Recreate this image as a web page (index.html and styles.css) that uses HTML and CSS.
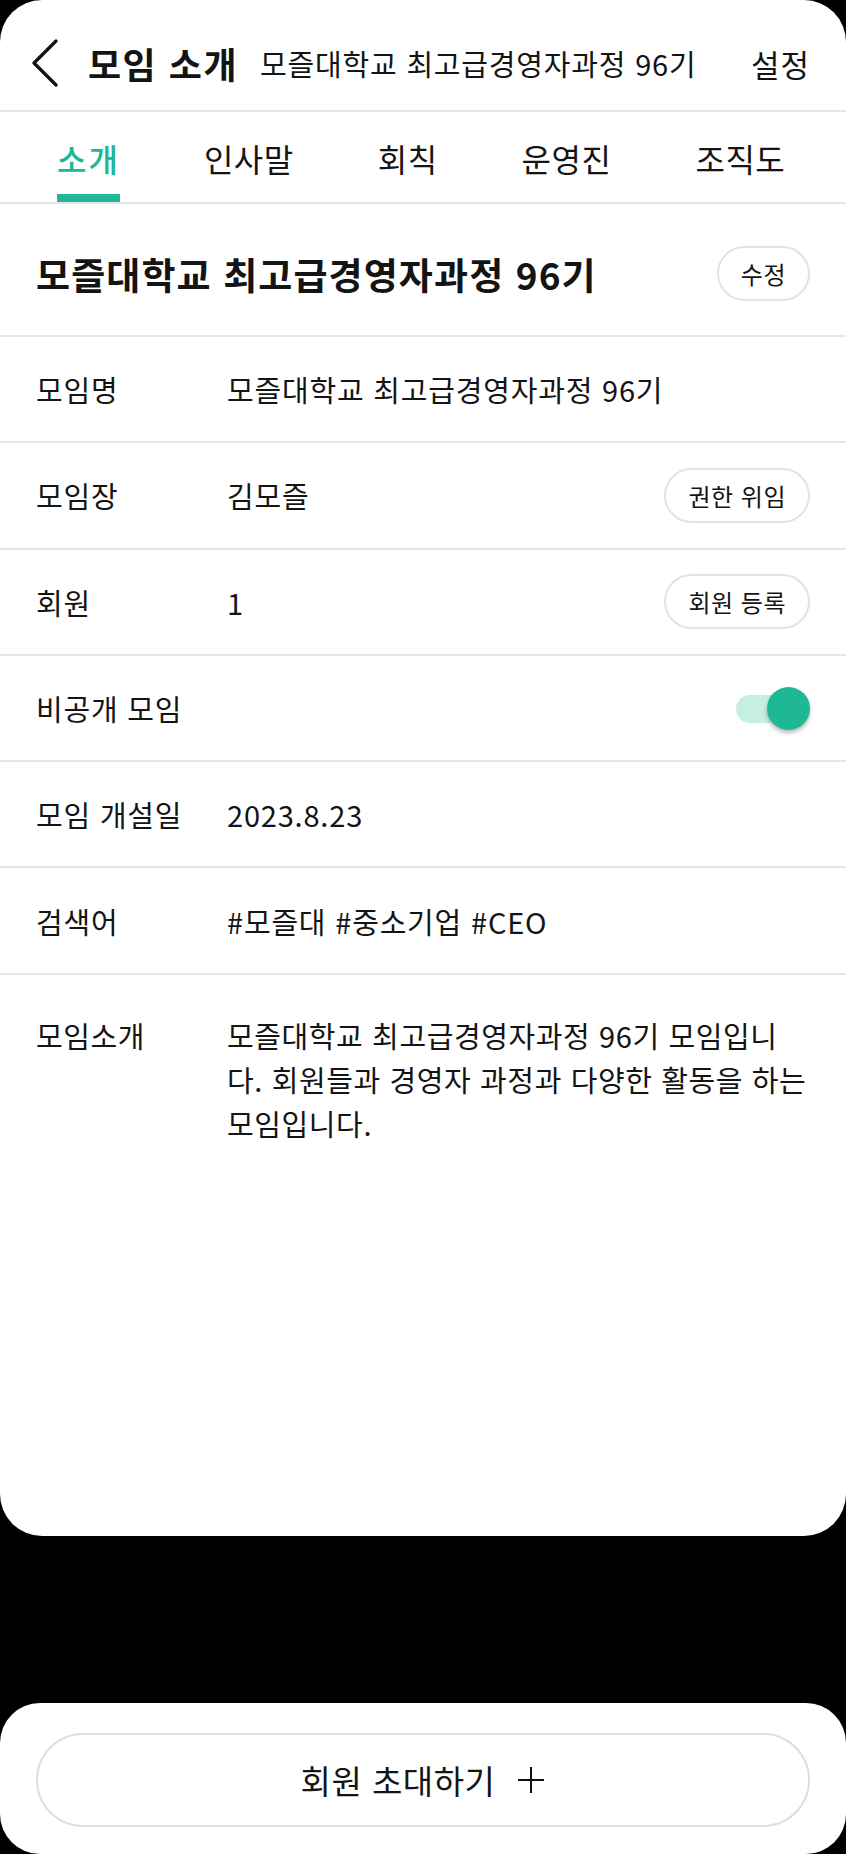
FILE: index.html
```html
<!DOCTYPE html>
<html lang="ko">
<head>
    <meta charset="UTF-8">
    <meta name="viewport" content="width=device-width, initial-scale=1.0">
    <title>모임 소개</title>
    <link rel="stylesheet" href="styles.css">
</head>
<body>
    <div class="sheet">
        <div class="header">
            <svg class="back" width="28" height="48" viewBox="0 0 28 48">
                <path d="M25 2 L3 24 L25 46" fill="none" stroke="#111" stroke-width="3.2" stroke-linecap="round" stroke-linejoin="round"/>
            </svg>
            <span class="header-title">모임 소개</span>
            <span class="header-sub">모즐대학교 최고급경영자과정 96기</span>
            <span class="header-action">설정</span>
        </div>

        <div class="tabs">
            <div class="tab active">소개</div>
            <div class="tab">인사말</div>
            <div class="tab">회칙</div>
            <div class="tab">운영진</div>
            <div class="tab">조직도</div>
        </div>

        <div class="title-row">
            <h2 class="group-name">모즐대학교 최고급경영자과정 96기</h2>
            <button class="pill">수정</button>
        </div>

        <div class="row">
            <span class="label">모임명</span>
            <span class="value">모즐대학교 최고급경영자과정 96기</span>
        </div>
        <div class="row">
            <span class="label">모임장</span>
            <span class="value">김모즐</span>
            <button class="pill">권한 위임</button>
        </div>
        <div class="row">
            <span class="label">회원</span>
            <span class="value">1</span>
            <button class="pill">회원 등록</button>
        </div>
        <div class="row">
            <span class="label">비공개 모임</span>
            <span class="value"></span>
            <div class="toggle">
                <div class="toggle-track"></div>
                <div class="toggle-knob"></div>
            </div>
        </div>
        <div class="row">
            <span class="label">모임 개설일</span>
            <span class="value">2023.8.23</span>
        </div>
        <div class="row">
            <span class="label">검색어</span>
            <span class="value">#모즐대 #중소기업 #CEO</span>
        </div>
        <div class="row intro">
            <span class="label">모임소개</span>
            <span class="value">모즐대학교 최고급경영자과정 96기 모임입니<br>다. 회원들과 경영자 과정과 다양한 활동을 하는<br>모임입니다.</span>
        </div>
    </div>

    <div class="bottom">
        <button class="invite">
            회원 초대하기
            <svg width="28" height="28" viewBox="0 0 28 28">
                <path d="M14 1 V27 M1 14 H27" stroke="#111" stroke-width="2"/>
            </svg>
        </button>
    </div>
</body>
</html>
```

FILE: styles.css
```css
body {
    margin: 0;
    height: 1854px;
    background: #000;
    font-family: "Noto Sans CJK KR", "Noto Sans", sans-serif;
    color: #141414;
    display: flex;
    flex-direction: column;
}
.sheet {
    height: 1536px;
    background: #fff;
    border-radius: 42px;
    overflow: hidden;
}
.header {
    height: 112px;
    box-sizing: border-box;
    padding: 16px 36px 0 31px;
    display: flex;
    align-items: center;
    border-bottom: 2px solid #e6e6e6;
}
.back {
    margin-right: 29px;
}
.header-title {
    font-size: 36px;
    font-weight: 700;
    letter-spacing: 1.5px;
    margin-right: 22px;
}
.header-sub {
    flex: 1;
    font-size: 29px;
    letter-spacing: 0.8px;
}
.header-action {
    font-size: 31px;
    letter-spacing: 1px;
}
.tabs {
    height: 92px;
    box-sizing: border-box;
    padding-left: 57px;
    display: flex;
    gap: 84px;
    border-bottom: 2px solid #e6e6e6;
}
.tab {
    font-size: 32px;
    letter-spacing: 0.5px;
    line-height: 36px;
    padding-top: 28px;
    box-sizing: border-box;
    height: 90px;
    border-bottom: 8px solid transparent;
}
.tab.active {
    color: #20b796;
    font-weight: 500;
    letter-spacing: 2px;
    border-bottom-color: #20b796;
}
.title-row {
    height: 133px;
    box-sizing: border-box;
    padding: 8px 36px 0;
    display: flex;
    align-items: center;
    justify-content: space-between;
    border-bottom: 2px solid #e8e8e8;
}
.group-name {
    margin: 0;
    font-size: 37px;
    font-weight: 700;
    letter-spacing: 1.1px;
}
.pill {
    height: 55px;
    padding: 0 22px;
    font-family: inherit;
    font-size: 24px;
    letter-spacing: 0.5px;
    color: #141414;
    background: #fff;
    border: 2px solid #e3e3e3;
    border-radius: 28px;
}
.row {
    min-height: 106.3px;
    box-sizing: border-box;
    padding: 0 36px;
    display: flex;
    align-items: center;
    border-bottom: 2px solid #e6e6e6;
    font-size: 29px;
    letter-spacing: 0.8px;
}
.label {
    width: 191px;
    flex-shrink: 0;
}
.value {
    flex: 1;
}
.row.intro {
    align-items: flex-start;
    padding-top: 38px;
    border-bottom: none;
    line-height: 44px;
    letter-spacing: 0.6px;
}
.row.intro .value {
    white-space: nowrap;
}
.toggle {
    position: relative;
    width: 74px;
    height: 43px;
}
.toggle-track {
    position: absolute;
    left: 0;
    top: 8px;
    width: 66px;
    height: 28px;
    border-radius: 14px;
    background: #c6eee3;
}
.toggle-knob {
    position: absolute;
    right: 0;
    top: 0;
    width: 43px;
    height: 43px;
    border-radius: 50%;
    background: #1fb896;
    box-shadow: 0 3px 4px rgba(0, 0, 0, 0.28);
}
.bottom {
    margin-top: 167px;
    height: 151px;
    background: #fff;
    border-radius: 40px;
    padding: 30px 36px 0;
    box-sizing: border-box;
}
.invite {
    width: 100%;
    height: 94px;
    background: #fff;
    border: 2px solid #dedede;
    border-radius: 47px;
    font-family: inherit;
    font-size: 33px;
    letter-spacing: 0.5px;
    color: #141414;
    display: flex;
    align-items: center;
    justify-content: center;
    gap: 22px;
}
```
